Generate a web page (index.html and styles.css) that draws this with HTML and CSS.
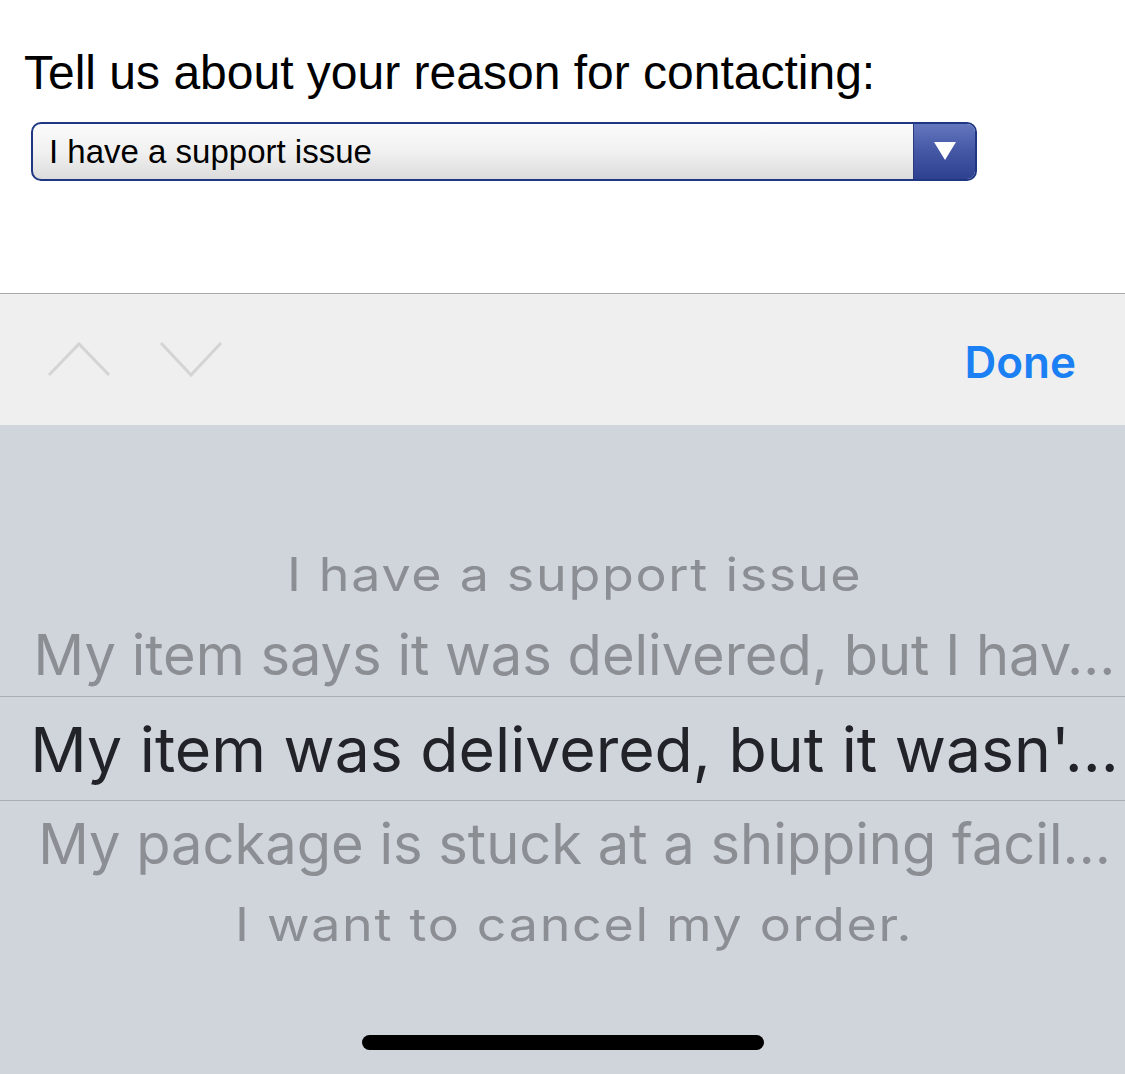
FILE: index.html
```html
<!DOCTYPE html>
<html lang="en">
<head>
<meta charset="utf-8">
<title>Contact reason</title>
<link rel="stylesheet" href="styles.css">
</head>
<body>
<div class="page">
  <section class="form">
    <h1 class="prompt">Tell us about your reason for contacting:</h1>
    <div class="select">
      <span class="select-value">I have a support issue</span>
      <span class="select-arrow"><span class="tri"></span></span>
    </div>
  </section>
  <div class="toolbar">
    <div class="nav">
      <svg class="chev" width="64" height="36" viewBox="0 0 64 36"><polyline points="2,34 32,3 62,34" fill="none" stroke="#d4d4d4" stroke-width="3"/></svg>
      <svg class="chev" width="64" height="36" viewBox="0 0 64 36"><polyline points="2,2 32,34 62,2" fill="none" stroke="#d4d4d4" stroke-width="3"/></svg>
    </div>
    <span class="done">Done</span>
  </div>
  <div class="picker">
    <div class="row far r1"><span>I have a support issue</span></div>
    <div class="row near r2"><span>My item says it was delivered, but I hav…</span></div>
    <div class="row sel"><span>My item was delivered, but it wasn'…</span></div>
    <div class="row near r4"><span>My package is stuck at a shipping facil…</span></div>
    <div class="row far r5"><span>I want to cancel my order.</span></div>
    <div class="spacer"></div>
    <div class="home"></div>
  </div>
</div>
</body>
</html>
```
FILE: styles.css
```css
html, body {
  margin: 0;
  padding: 0;
  background: #fff;
}
.page {
  width: 1125px;
  height: 1074px;
  display: flex;
  flex-direction: column;
  overflow: hidden;
}
.form {
  height: 294px;
  padding: 45px 0 0 24px;
  box-sizing: border-box;
  border-bottom: 1px solid #a9a9a9;
  background: #fff;
}
.prompt {
  margin: 0;
  font-family: "Liberation Sans", Arial, sans-serif;
  font-weight: normal;
  font-size: 48px;
  line-height: 56px;
  color: #000;
}
.select {
  margin: 21px 0 0 7px;
  width: 946px;
  height: 59px;
  box-sizing: border-box;
  border: 2px solid #1f3783;
  border-radius: 10px;
  display: flex;
  overflow: hidden;
  background: linear-gradient(#fbfbfb, #f1f1f1 50%, #dcdcdc);
}
.select-value {
  flex: 1;
  padding-left: 16px;
  font-family: "Liberation Sans", Arial, sans-serif;
  font-size: 33px;
  line-height: 55px;
  color: #000;
}
.select-arrow {
  width: 61px;
  border-left: 1px solid #2a3c7e;
  background: linear-gradient(#6476bd, #4357a5 50%, #2e4190);
  display: flex;
  align-items: center;
  justify-content: center;
}
.tri {
  width: 0;
  height: 0;
  border-left: 11px solid transparent;
  border-right: 11px solid transparent;
  border-top: 18px solid #fff;
  margin-top: -2px;
}
.toolbar {
  height: 131px;
  background: #efefef;
  display: flex;
  align-items: center;
  justify-content: space-between;
  padding: 0 49px 0 47px;
  box-sizing: border-box;
}
.nav {
  display: flex;
  gap: 48px;
  margin-top: -1px;
}
.done {
  font-family: Inter, "Noto Sans", sans-serif;
  font-weight: 600;
  font-size: 44px;
  color: #1a80f3;
  margin-top: 4px;
}
.picker {
  flex: 1;
  background: #d0d4db;
  display: flex;
  flex-direction: column;
  padding-top: 109px;
  font-family: Inter, "Noto Sans", sans-serif;
}
.row {
  display: flex;
  justify-content: center;
  align-items: center;
  white-space: nowrap;
  color: #8b8e93;
  padding-left: 24px;
}
.r1 { height: 80px; }
.r2 { height: 82px; border-bottom: 1px solid #aaaeb4; }
.sel { height: 103px; border-bottom: 1px solid #aaaeb4; color: #212328; }
.r4 { height: 86px; }
.r5 { height: 74px; }
.far span {
  font-size: 46px;
  letter-spacing: 1.5px;
  transform: scaleX(1.13);
  display: inline-block;
}
.near span {
  font-size: 56px;
}
.sel span {
  font-size: 62.5px;
}
.spacer { flex: 1; }
.home {
  align-self: center;
  width: 402px;
  height: 15px;
  border-radius: 8px;
  background: #000;
  margin-bottom: 24px;
}
```
